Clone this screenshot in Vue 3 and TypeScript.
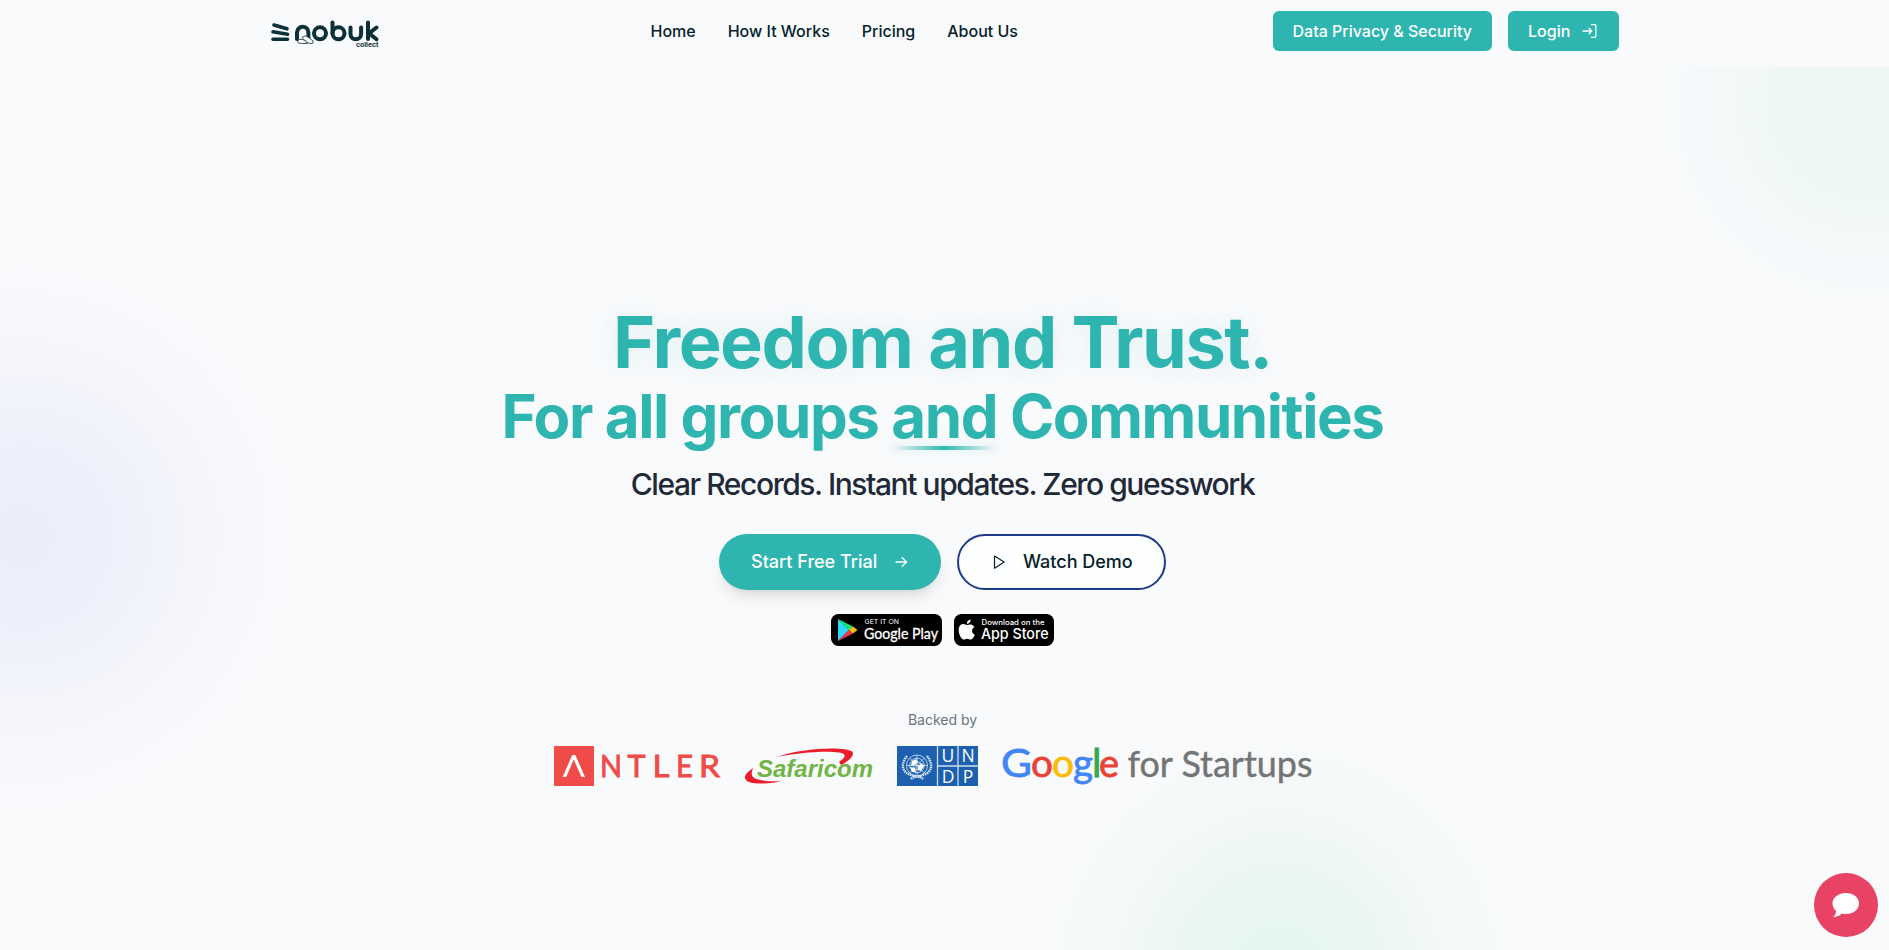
<script setup lang="ts">
const links: string[] = ['Home', 'How It Works', 'Pricing', 'About Us']
const undp: string[] = ['U', 'N', 'D', 'P']

interface Glyph { c: string; x: number; w: number; fill?: string }
const antler: Glyph[] = [
  { c: 'N', x: 46, w: 22 }, { c: 'T', x: 73.5, w: 18 }, { c: 'L', x: 98.5, w: 17 },
  { c: 'E', x: 122, w: 17 }, { c: 'R', x: 145, w: 21 },
]
const google: Glyph[] = [
  { c: 'G', x: -1, w: 31, fill: '#4285f4' }, { c: 'o', x: 29, w: 22, fill: '#ea4335' },
  { c: 'o', x: 50, w: 22, fill: '#fbbc04' }, { c: 'g', x: 71, w: 20, fill: '#4285f4' },
  { c: 'l', x: 90, w: 9.5, fill: '#34a853' }, { c: 'e', x: 97, w: 20, fill: '#ea4335' },
]
</script>

<template>
  <div class="page">
    <header class="header">
      <div class="bar">
        <svg class="brand" width="112" height="34" viewBox="0 0 112 34" role="img" aria-label="nobuk collect">
          <g stroke="#0b3037" stroke-width="3.6" stroke-linecap="round" fill="none">
            <path d="M4 6 L17 9.800 M3 12.800 L17.500 15.300 M3 20.300 H17.500" />
          </g>
          <g stroke="#0b3037" stroke-width="4" stroke-linecap="round" stroke-linejoin="round" fill="none">
            <path d="M27 20 V13.500 a5.700 5.700 0 0 1 11.400 0 V20" />
            <circle cx="50" cy="14.300" r="6" />
            <path d="M62.500 3.500 V14.300" /><circle cx="68.500" cy="14.300" r="6" />
            <path d="M80.500 8.500 V15 a5.300 5.300 0 0 0 10.600 0 V8.500" />
            <path d="M98 3.500 V20 M106.500 8.500 L99 14.300 L106.500 20.300" />
          </g>
          <g fill="#f8fafc" stroke="#0b3037" stroke-width="0.8" stroke-linejoin="round">
            <path d="M27.500 22.500 q1-3 5-2 q3 0 5 4 h-6 q-4 0-4-2z" />
            <path d="M32 18.500 q3-3 6-.5 l5 4 q1 3-2 2.500 q-4 0-6-3z" />
          </g>
          <text x="86" y="27.500" font-size="6.800" font-weight="700" textLength="22.500" lengthAdjust="spacingAndGlyphs" fill="#0b3037">collect</text>
        </svg>
        <nav class="nav"><a v-for="l in links" :key="l">{{ l }}</a></nav>
        <div class="actions">
          <button class="btn">Data Privacy &amp; Security</button>
          <button class="btn login">Login
            <svg width="16" height="16" viewBox="0 0 15 15" fill="none" stroke="#fff" stroke-width="1.200"><path d="M8.500 1.500 H12 a1 1 0 0 1 1 1 V12.500 a1 1 0 0 1-1 1 H8.500 M.5 7.500 H9 M6.200 4.500 L9.200 7.500 L6.200 10.500" /></svg>
          </button>
        </div>
      </div>
    </header>

    <main class="hero">
      <i class="blob green-top"></i><i class="blob indigo"></i><i class="blob green-bottom"></i>
      <h1>
        <span class="lead">Freedom and Trust.</span>
        <span class="second">For all groups <span class="underlined">and</span> Communities</span>
      </h1>
      <p class="tagline">Clear Records. Instant updates. Zero guesswork</p>
      <div class="cta">
        <button class="pill primary">Start Free Trial
          <svg width="16" height="16" viewBox="0 0 16 16" fill="none" stroke="#fff" stroke-width="1.400"><path d="M2.500 8 H13.500 M8.700 3.200 L13.500 8 L8.700 12.800" /></svg>
        </button>
        <button class="pill outline">
          <svg width="16" height="16" viewBox="0 0 16 16" fill="none" stroke="#05212a" stroke-width="1.200" stroke-linejoin="round"><path d="M3.500 2 L13.200 8 L3.500 14.200 Z" /></svg>
          Watch Demo
        </button>
      </div>
      <div class="stores">
        <svg width="111" height="32" viewBox="0 0 111 32">
          <rect width="111" height="32" rx="7.500" />
          <path d="M7 5 V27 L18 16 Z" fill="#2bd9fb" /><path d="M7 5 L22 12.500 L18 16.500 Z" fill="#18df76" />
          <path d="M22 12.400 L26.500 16 L22 19.600 L17.800 16 Z" fill="#fdbd0f" /><path d="M7 27 L22 19.500 L17.800 15.900 Z" fill="#f23750" />
          <g fill="#fff"><text x="33.500" y="10" font-size="6.800" textLength="34.500" lengthAdjust="spacingAndGlyphs">GET IT ON</text>
          <text class="geo" x="33" y="25" font-size="15" stroke="#fff" stroke-width=".3" textLength="74" lengthAdjust="spacingAndGlyphs">Google Play</text></g>
        </svg>
        <svg width="100" height="32" viewBox="0 0 100 32">
          <rect width="100" height="32" rx="7.500" />
          <path d="M13 10.900 c-1.200 0-2.200-.9-3.800-.9 c-2.300 0-4.500 2-4.500 6 c0 4.500 2.800 9.500 5 9.500 c1.300 0 1.900-.8 3.500-.8 s2 .8 3.400.8 c2 0 3.600-3 4.200-4.800 c-3.500-1.500-3.600-6.200-.3-7.800 c-2.600-3.600-5.600-2.400-7.500-2 M12.800 9.800 c-.1-2.400 1.700-4 3.800-4.300 c.3 2.300-1.500 4.300-3.800 4.300" fill="#fff" />
          <g fill="#fff"><text x="27.500" y="11" font-size="7" font-weight="500" textLength="63" lengthAdjust="spacingAndGlyphs">Download on the</text>
          <text x="27" y="25.300" font-size="14.800" font-weight="500" textLength="67.500" lengthAdjust="spacingAndGlyphs">App Store</text></g>
        </svg>
      </div>
      <p class="backed">Backed by</p>
      <div class="backers">
        <svg width="166" height="40" viewBox="0 0 166 40">
          <rect width="40" height="40" fill="#ef4b48" />
          <path d="M8.700 31 L18.200 9 H21.300 L31 31 H27.400 L19.700 13.500 L12.300 31 Z" fill="#fff" />
          <g class="geo" fill="#ef4b48" stroke="#ef4b48" stroke-width=".9" font-size="31">
            <text v-for="g in antler" :key="g.c" :x="g.x" y="31" :textLength="g.w" lengthAdjust="spacingAndGlyphs">{{ g.c }}</text>
          </g>
        </svg>
        <svg width="129" height="40" viewBox="0 0 129 40">
          <path d="M33 11 C57 2 102 0 108.500 6 C111 10 103 16 97 19 L95 16 C101 12 104 8 95 6.500 C80 4.500 53 7 33 11 Z M9.500 22 C-2.500 29-2.500 37 14 37.500 C24 38 32 36.500 37 35 C25 36 12 34.500 9 31 C7 29 7.500 25 9.500 22 Z" fill="#ec1c2b" />
          <text x="13" y="31" class="saf" font-size="24" font-weight="700" font-style="italic" textLength="116" lengthAdjust="spacingAndGlyphs" fill="#70b544">Safaricom</text>
        </svg>
        <svg width="81" height="40" viewBox="0 0 81 40">
          <rect width="81" height="40" fill="#1d60af" />
          <path d="M40.500 0 V40 M61 0 V40 M41 20 H81" stroke="#cfdfef" stroke-width="1.300" />
          <g fill="none" stroke="#d5e4f4" stroke-width=".8">
            <circle cx="20" cy="19.500" r="10.500" /><circle cx="20" cy="19.500" r="7.300" /><circle cx="20" cy="19.500" r="4" />
            <path d="M9.500 19.500 H30.500 M20 9 V30 M12.600 12 L27.400 27 M27.400 12 L12.600 27" />
            <path d="M10 10 C2 20 6 29 19 30 M30 10 C38 20 34 29 21 30 M14 33 C17 30 23 30 26 33" stroke-width="2.400" stroke-dasharray="1.600 .7" />
          </g>
          <path d="M15 15 l4-2 l2 3 l-3 3 l-4 0z M21 20 l4-3 l2 3 l-3 5 l-3-1z M13 21 l5 1 l1 4 l-4 0z" fill="#fff" />
          <text v-for="(c, i) in undp" :key="c" class="un" :x="i % 2 ? 71 : 51" :y="i < 2 ? 16 : 37" font-size="17.500" text-anchor="middle" fill="#fff">{{ c }}</text>
        </svg>
        <svg width="329" height="40" viewBox="0 0 329 40">
          <g class="geo" font-size="39">
            <text v-for="(g, i) in google" :key="i" :x="g.x" y="31" :textLength="g.w" lengthAdjust="spacingAndGlyphs" :fill="g.fill" :stroke="g.fill" stroke-width=".8">{{ g.c }}</text>
            <text x="125.500" y="31" font-size="37" textLength="185" lengthAdjust="spacingAndGlyphs" fill="#737475" stroke="#737475" stroke-width=".4">for Startups</text>
          </g>
        </svg>
      </div>
    </main>

    <button class="chat" aria-label="Chat">
      <svg width="28" height="26" viewBox="0 0 28 26"><path d="M14 1 C21.500 1 27 5.500 27 11.500 S21.500 22 14 22 C12.500 22 11 21.900 9.800 21.500 C8 23.700 4.500 25 1 25 C3 23.500 4.200 21.500 4 19 C2 17 .5 14.500 .5 11.500 C.5 5.500 6.500 1 14 1 Z" fill="#fff" /></svg>
    </button>
  </div>
</template>

<style>
body { margin: 0; background: #f9fafc; }
</style>

<style scoped>
* { box-sizing: border-box; }
.page { height: 950px; overflow: hidden; display: flex; flex-direction: column; background: #f9fafc; font-family: Inter, sans-serif; color: #05212a; }
.header { height: 67px; flex: none; display: flex; justify-content: center; }
.bar { width: 1349px; height: 62px; display: grid; grid-template-columns: 380.5px 1fr auto; align-items: center; }
.brand { display: block; margin-top: 10px; }
.nav { display: flex; gap: 32px; font-size: 16px; font-weight: 500; line-height: 24px; }
.actions { display: flex; gap: 16px; }
button { font-family: inherit; border: 0; padding: 0; }
.btn { height: 40px; padding: 0 20px; border-radius: 6px; background: #2fb5b0; color: #fff; font-size: 16px; font-weight: 500; display: flex; align-items: center; }
.login { width: 111px; gap: 12px; }
.hero { position: relative; flex: 1; overflow: hidden; padding-right: 4px; display: flex; flex-direction: column; align-items: center; }
.hero > :not(.blob) { position: relative; }
h1 { margin: 235px 0 0; color: #2fb5b0; font-weight: 700; text-align: center; letter-spacing: -1.42px; }
h1 > span { display: block; white-space: nowrap; }
.lead { font-size: 72px; line-height: 79px; text-shadow: 0 0 24px rgba(47, 181, 176, .13); }
.second { margin-top: 2px; font-size: 60px; line-height: 66px; }
.underlined { position: relative; }
.underlined::after { content: ''; position: absolute; left: 0; right: 0; bottom: 2px; height: 4px; border-radius: 4px; background: linear-gradient(90deg, transparent, #2fb5b0, transparent); box-shadow: 0 0 10px rgba(47, 181, 176, .2); }
.tagline { margin: 17px 0 0; font-size: 30px; line-height: 36px; font-weight: 500; letter-spacing: -1.43px; color: #1f2937; }
.cta { margin-top: 32px; display: flex; gap: 16px; }
.pill { height: 56px; border-radius: 28px; display: flex; align-items: center; gap: 16px; padding-bottom: 1px; font-size: 18px; font-weight: 500; white-space: nowrap; }
.primary { width: 222px; padding-left: 32px; background: #2fb5b0; color: #fff; box-shadow: 0 10px 15px -3px rgba(0, 0, 0, .1), 0 4px 6px -4px rgba(0, 0, 0, .1); }
.outline { width: 209px; padding-left: 32px; border: 2px solid #1e3a8a; background: #fdfefe; color: #05212a; }
.stores { margin-top: 24px; display: flex; gap: 12px; }
svg { display: block; overflow: visible; }
.backed { margin: 64px 0 0; font-size: 14px; line-height: 20px; color: #6b7280; }
.backers { margin-top: 16px; display: flex; gap: 24px; }
.geo { font-family: Lato, sans-serif; }
.saf { font-family: "Liberation Sans", sans-serif; }
.un { font-family: "Open Sans", sans-serif; }
.blob { position: absolute; border-radius: 50%; }
.green-top { left: 1641px; top: -192px; width: 450px; height: 450px; background: radial-gradient(closest-side, #ecf6f3, #eff7f6 40%, #f5f9fa 68%, rgba(249, 250, 252, 0)); }
.indigo { left: -248px; top: 199px; width: 540px; height: 540px; background: radial-gradient(closest-side, #ebedfb, #eef0fb 35%, #f5f6fb 65%, rgba(249, 250, 252, 0)); }
.green-bottom { left: 1034px; top: 658px; width: 490px; height: 490px; background: radial-gradient(closest-side, #e3f6f0, #e9f6f2 35%, #f3f8f8 65%, rgba(249, 250, 252, 0)); }
.chat { position: fixed; left: 1814px; top: 873px; width: 64px; height: 64px; border-radius: 50%; background: #e84364; display: flex; align-items: center; justify-content: center; }
</style>
